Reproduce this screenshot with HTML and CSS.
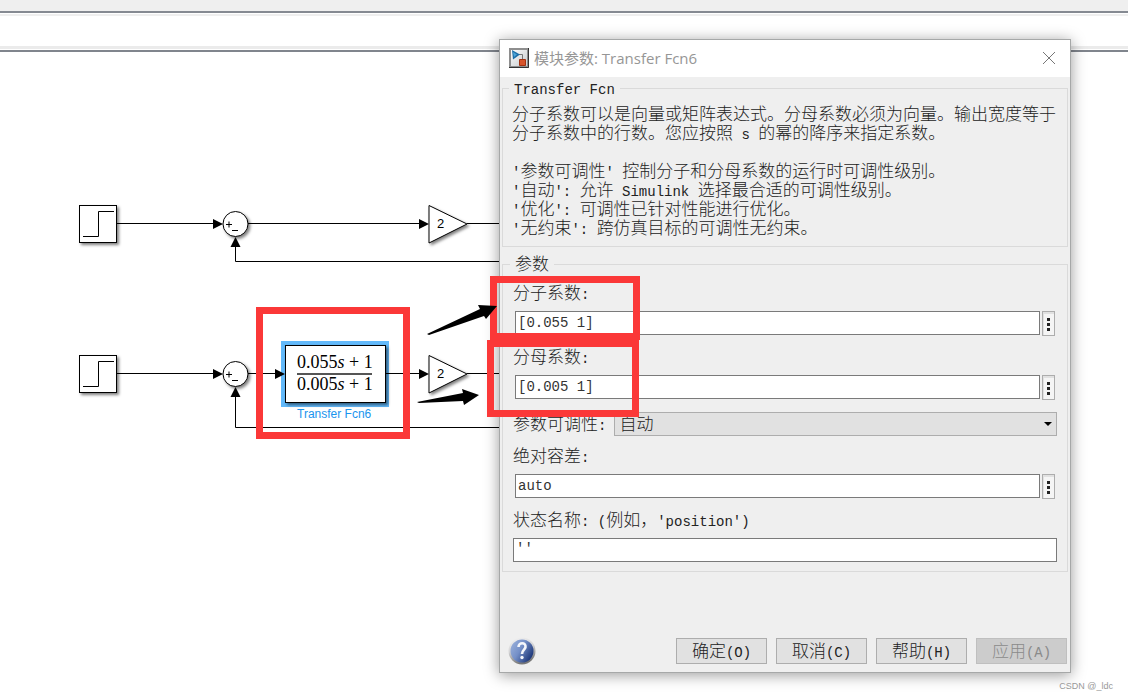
FILE: index.html
```html
<!DOCTYPE html>
<html lang="zh-CN">
<head>
<meta charset="utf-8">
<title>模块参数: Transfer Fcn6</title>
<link rel="stylesheet" href="styles.css">
</head>
<body>
<div class="toolbar"></div>
<div class="pathbar"></div>
<main class="canvas">
  <svg class="diagram" width="500" height="648" viewBox="0 52 500 648" role="img" aria-label="Simulink">
    <defs>
      <filter id="shadow" x="-20%" y="-20%" width="150%" height="150%">
        <feDropShadow dx="2" dy="2" stdDeviation="1.5" flood-color="#000" flood-opacity="0.5"/>
      </filter>
      <g id="step">
        <rect x="79.500" y="205.500" width="37" height="37" class="block" filter="url(#shadow)"/>
        <path d="M83 236.500H98.500V211.500H114" class="wire"/>
      </g>
      <g id="sum">
        <circle cx="235.500" cy="224" r="12.500" class="block" filter="url(#shadow)"/>
        <path d="M226 224.500h6M229 221.500v6M232 230.500h6" class="wire"/>
      </g>
      <path id="gain" d="M429 205.500V243L467 224Z" class="block" filter="url(#shadow)"/>
      <path id="head" d="M0 0L-10 -5V5Z"/>
      <path id="headup" d="M0 0L-5 10H5Z"/>
    </defs>
    <path class="wire" d="M117 223.500H214M248 223.500H420M467 223.500H500M235.500 246V261.500H500"/>
    <use href="#step"/><use href="#sum"/><use href="#gain"/>
    <use href="#head" x="223" y="224"/><use href="#head" x="429" y="224"/><use href="#headup" x="235.500" y="237"/>
    <text class="gain-label" x="437" y="228">2</text>

    <path class="wire" d="M117 373.500H214M248 373.500H276M386 373.500H420M467 373.500H500M235.500 396V427.500H500"/>
    <use href="#step" y="150"/><use href="#sum" y="150"/><use href="#gain" y="150"/>
    <rect x="281" y="341" width="108" height="66" fill="#62b9fa"/>
    <rect x="285.500" y="345.500" width="100" height="57" class="block" filter="url(#shadow)"/>
    <path class="wire" d="M386 373.500H390"/>
    <use href="#head" x="223" y="374"/><use href="#head" x="285" y="374"/><use href="#head" x="429" y="374"/><use href="#headup" x="235.500" y="387"/>
    <text class="gain-label" x="437" y="378">2</text>
    <text class="formula" x="297" y="368">0.055<tspan class="var">s</tspan> + 1</text>
    <path d="M297 374H372" stroke="#555" stroke-width="2"/>
    <text class="formula" x="297" y="390">0.005<tspan class="var">s</tspan> + 1</text>
    <text class="block-name" x="297" y="418">Transfer Fcn6</text>
  </svg>
</main>

<form class="dialog">
  <header class="titlebar">
    <svg class="app-icon" width="20" height="20" viewBox="0 0 20 20" aria-hidden="true">
      <defs><linearGradient id="tile" x2="1" y2="1"><stop stop-color="#fff"/><stop offset="1" stop-color="#c4c8ca"/></linearGradient></defs>
      <path d="M1 1H19V19H1Z" fill="url(#tile)" stroke="#8e8e8e" stroke-width="2"/>
      <path d="M19.500 0V19.500H0" fill="none" stroke="#333"/>
      <path d="M10 6.500H13.500V11" fill="none" stroke="#777"/>
      <path d="M3 2L11 6.500L4 11.500Z" fill="#1c6ea8"/>
      <path d="M4 4L8 6.500L5 9" fill="#4ba3d6"/>
      <path d="M10.500 11.500h6v6h-6z" fill="#d7542b" stroke="#a23212"/>
    </svg>
    <h1 class="title">模块参数: Transfer Fcn6</h1>
    <button class="close" type="button" aria-label="关闭">
      <svg width="14" height="14" viewBox="0 0 14 14"><path d="M1 1L13 13M13 1L1 13" stroke="#777" fill="none"/></svg>
    </button>
  </header>

  <fieldset class="group">
    <legend class="legend"><span class="mono">Transfer Fcn</span></legend>
    <p class="desc">分子系数可以是向量或矩阵表达式。分母系数必须为向量。输出宽度等于<br>分子系数中的行数。您应按照<span class="mono"> s </span>的幂的降序来指定系数。<br><br><span class="mono">'</span>参数可调性<span class="mono">' </span>控制分子和分母系数的运行时可调性级别。<br><span class="mono">'</span>自动<span class="mono">': </span>允许<span class="mono"> Simulink </span>选择最合适的可调性级别。<br><span class="mono">'</span>优化<span class="mono">': </span>可调性已针对性能进行优化。<br><span class="mono">'</span>无约束<span class="mono">': </span>跨仿真目标的可调性无约束。</p>
  </fieldset>

  <fieldset class="group params">
    <legend class="legend">参数</legend>
    <div class="field">
      <label for="num">分子系数<span class="mono">:</span></label>
      <div class="entry"><input id="num" class="box" type="text" value="[0.055 1]"><button class="more" type="button" aria-label="更多"><i></i><i></i><i></i></button></div>
    </div>
    <div class="field">
      <label for="den">分母系数<span class="mono">:</span></label>
      <div class="entry"><input id="den" class="box" type="text" value="[0.005 1]"><button class="more" type="button" aria-label="更多"><i></i><i></i><i></i></button></div>
    </div>
    <div class="choice">
      <label for="tune">参数可调性<span class="mono">:</span></label>
      <div class="select-wrap">
        <select id="tune" class="select"><option>自动</option></select>
        <svg class="caret" width="8" height="4" viewBox="0 0 8 4" aria-hidden="true"><path d="M0 0H8L4 4Z"/></svg>
      </div>
    </div>
    <div class="field">
      <label for="tol">绝对容差<span class="mono">:</span></label>
      <div class="entry"><input id="tol" class="box" type="text" value="auto"><button class="more" type="button" aria-label="更多"><i></i><i></i><i></i></button></div>
    </div>
    <div class="field">
      <label for="state">状态名称<span class="mono">: (</span>例如，<span class="mono">'position')</span></label>
      <textarea id="state" class="box wide" rows="1">''</textarea>
    </div>
  </fieldset>

  <footer class="footer">
    <button class="help" type="button" aria-label="帮助">
      <svg width="28" height="28" viewBox="0 0 28 28">
        <defs>
          <linearGradient id="rim" x2="0.300" y2="1"><stop stop-color="#f5f5f5"/><stop offset="0.500" stop-color="#d4d4d6"/><stop offset="1" stop-color="#777"/></linearGradient>
          <linearGradient id="ball" x2="1" y2="0.600"><stop stop-color="#9fb5dd"/><stop offset="0.500" stop-color="#7590c8"/><stop offset="1" stop-color="#203a7c"/></linearGradient>
        </defs>
        <circle cx="14" cy="14" r="13.500" fill="url(#rim)"/>
        <circle cx="14" cy="14" r="11.500" fill="url(#ball)"/>
        <path d="M10.500 10C10.500 5 18 5 17.500 10C17.300 12.500 14 13 14 17" fill="none" stroke="#f4f6fb" stroke-width="2.600"/>
        <circle cx="14" cy="20.500" r="1.700" fill="#f4f6fb"/>
      </svg>
    </button>
    <button class="action" type="button">确定<span class="mono">(O)</span></button>
    <button class="action" type="button">取消<span class="mono">(C)</span></button>
    <button class="action" type="button">帮助<span class="mono">(H)</span></button>
    <button class="action" type="button" disabled>应用<span class="mono">(A)</span></button>
  </footer>
</form>

<svg class="marks" width="660" height="450" viewBox="0 0 660 450" aria-hidden="true">
  <g fill="none" stroke="#fb3838" stroke-width="7">
    <path d="M259.500 310.500H406.500V435.500H259.500Z"/>
    <path d="M493.500 279.500H636.500V336.500H493.500Z"/>
    <path d="M490.500 343.500H635.500V413.500H490.500Z"/>
  </g>
  <path d="M427 334L480 309L478 305L497 306L486 319L484 316L429 335Z"/>
  <path d="M417 402L463 393L462 389L479 395L464 405L463 401L419 403Z"/>
</svg>
<p class="credit">CSDN @_ldc</p>
</body>
</html>
```
FILE: styles.css
```css
* { box-sizing: border-box; }

body {
  margin: 0;
  min-height: 100vh;
  display: flex;
  flex-direction: column;
  position: relative;
  background: #fff;
  color: #222;
  font: 300 17px/20px Roboto, "Noto Sans CJK SC", sans-serif;
}

/* editor chrome */
.toolbar {
  height: 13px;
  background: #efefef;
  border-bottom: 2px solid #858a92;
}
.pathbar {
  height: 39px;
  border-bottom: 2px solid #80858d;
  background: linear-gradient(#fff 1px, #efefef 1px 3px, #fff 3px 33px, #ebebeb 33px 36px, #fff 36px);
}
.canvas { flex: 1; }

/* block diagram */
.diagram { display: block; }
.block { fill: #fff; stroke: #000; }
.wire { fill: none; stroke: #000; }
.gain-label { font: 13px "Liberation Sans", sans-serif; }
.formula { font: 18px "Liberation Serif", serif; }
.var { font-style: italic; }
.block-name { font: 12px "Liberation Sans", sans-serif; fill: #1a94ee; }

/* dialog window */
.dialog {
  position: absolute;
  left: 499px;
  top: 39px;
  width: 572px;
  display: flex;
  flex-direction: column;
  background: #efefef;
  border: 1px solid #a6a8a8;
  box-shadow: 0 2px 14px rgba(0, 0, 0, 0.4);
}
.titlebar {
  display: flex;
  align-items: center;
  height: 37px;
  padding: 0 14px 2px 9px;
  gap: 5px;
  background: #fff;
}
.title {
  flex: 1;
  margin: 0;
  font: 15px/20px "Open Sans", "Noto Sans CJK SC", sans-serif;
  color: #969696;
}
.close, .help {
  display: flex;
  padding: 0;
  border: 0;
  background: none;
}
.group {
  min-width: 0;
  margin: 1px 2px 0;
  padding: 7px 8px 8px 9px;
  border: 1px solid #dadada;
}
.params { margin-top: 7px; padding: 9px 10px 9px 10px; }
.legend { padding: 0 5px; margin-left: -3px; line-height: 20px; }
.mono { font: 14px/0 "Liberation Mono", monospace; white-space: pre; }
.desc { margin: 0; line-height: 19px; white-space: nowrap; }

.field { display: flex; flex-direction: column; gap: 8px; }
.field + .field { margin-top: 11px; }
.entry { display: flex; align-items: flex-start; gap: 2px; padding: 0 2px; }
.box {
  flex: 1;
  min-width: 0;
  height: 24px;
  padding: 0 2px;
  border: 1px solid #7a7a7a;
  border-radius: 0;
  background: #fff;
  color: #333;
  font: 14px/20px "Liberation Mono", monospace;
}
.wide { flex: none; width: 100%; resize: none; overflow: hidden; }
.more {
  display: flex;
  flex-direction: column;
  align-items: center;
  justify-content: center;
  gap: 2px;
  width: 13px;
  height: 25px;
  padding: 1px 0 0;
  border: 1px solid #adadad;
  background: #f5f5f5;
  box-shadow: inset 0 2px #e1e1e1, inset 1px 0 #e1e1e1;
}
.more i { width: 3px; height: 3px; background: #222; }
.choice {
  display: flex;
  align-items: center;
  gap: 8px;
  margin: 12px 0 10px;
}
.select-wrap { position: relative; flex: 1; display: flex; }
.select {
  appearance: none;
  flex: 1;
  height: 24px;
  padding: 0 4px;
  border: 1px solid #adadad;
  border-radius: 0;
  background: #e1e1e1;
  color: #222;
  font: inherit;
}
.caret { position: absolute; right: 5px; top: 10px; }

.footer {
  display: flex;
  align-items: center;
  gap: 9px;
  margin-top: 66px;
  padding: 0 3px 8px 8px;
}
.help { margin: -1px auto -1px 0; }
.action {
  width: 91px;
  height: 26px;
  padding: 0;
  border: 1px solid #adadad;
  background: #e1e1e1;
  color: #222;
  font: inherit;
}
.action:disabled { background: #ccc; border-color: #bfbfbf; color: #8a8a8a; }

/* annotations over the window */
.marks { position: absolute; left: 0; top: 0; pointer-events: none; }
.credit {
  position: absolute;
  right: 15px;
  bottom: 8px;
  margin: 0;
  font: 9px/12px "Liberation Sans", sans-serif;
  color: #999;
}
```
